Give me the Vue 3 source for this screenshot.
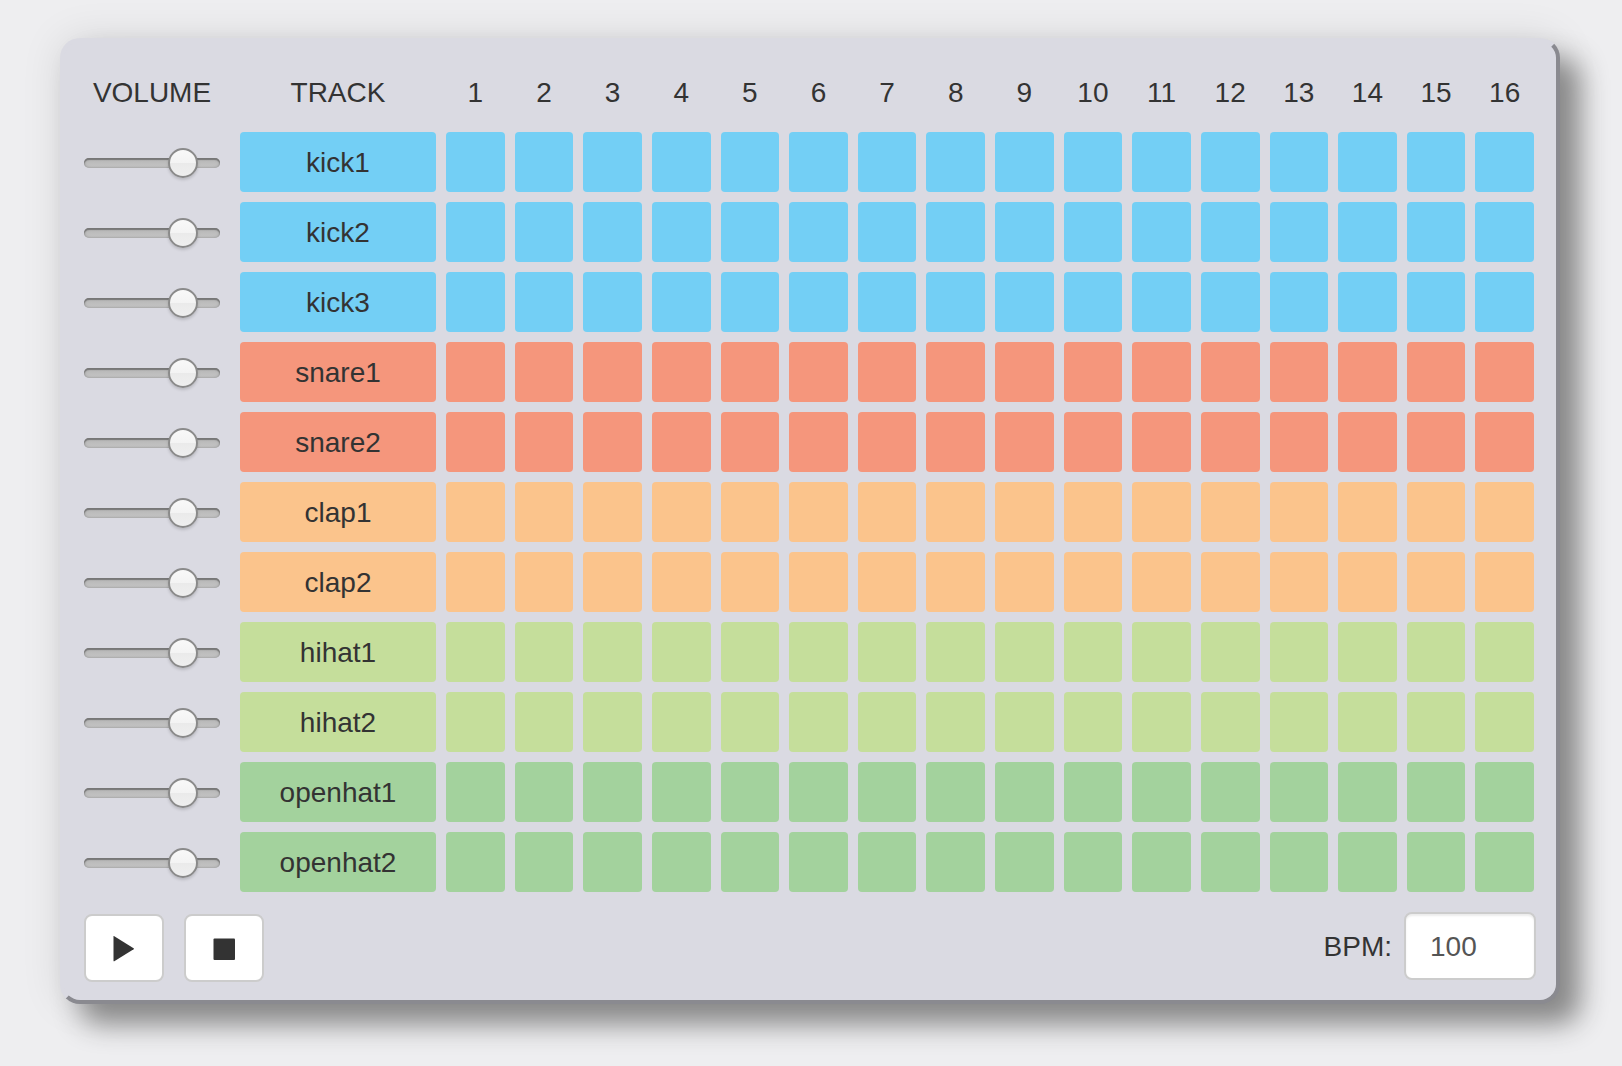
<script setup>
import { reactive, ref } from 'vue'

const STEPS = 16

const makeTrack = (name, kind) => ({
  name,
  kind,
  volume: 79,
  steps: Array(STEPS).fill(false),
})

const tracks = reactive([
  makeTrack('kick1', 'kick'),
  makeTrack('kick2', 'kick'),
  makeTrack('kick3', 'kick'),
  makeTrack('snare1', 'snare'),
  makeTrack('snare2', 'snare'),
  makeTrack('clap1', 'clap'),
  makeTrack('clap2', 'clap'),
  makeTrack('hihat1', 'hihat'),
  makeTrack('hihat2', 'hihat'),
  makeTrack('openhat1', 'openhat'),
  makeTrack('openhat2', 'openhat'),
])

const bpm = ref('100')
const playing = ref(false)
</script>

<template>
  <main class="machine">
    <table class="sequencer">
      <colgroup>
        <col class="col-volume" />
        <col class="col-track" />
        <col v-for="n in STEPS" :key="n" />
      </colgroup>
      <thead>
        <tr>
          <th scope="col" class="volume">VOLUME</th>
          <th scope="col">TRACK</th>
          <th v-for="n in STEPS" :key="n" scope="col">{{ n }}</th>
        </tr>
      </thead>
      <tbody>
        <tr v-for="track in tracks" :key="track.name" :class="track.kind">
          <td class="volume">
            <input
              v-model="track.volume"
              class="slider"
              type="range"
              min="0"
              max="100"
              :aria-label="track.name + ' volume'"
            />
          </td>
          <th scope="row" class="name">{{ track.name }}</th>
          <td v-for="(on, i) in track.steps" :key="i">
            <button
              type="button"
              class="step"
              :class="{ on }"
              :aria-pressed="on"
              :aria-label="track.name + ' step ' + (i + 1)"
              @click="track.steps[i] = !on"
            ></button>
          </td>
        </tr>
      </tbody>
    </table>

    <footer class="controls">
      <div class="transport">
        <button type="button" class="control" aria-label="Play" @click="playing = true">
          <svg width="28" height="28" viewBox="0 0 28 28" aria-hidden="true">
            <path d="M3.500 2.600 Q3.500 1.800 4.300 2.200 L23.600 14.200 Q24.400 14.700 23.600 15.200 L4.300 27.200 Q3.500 27.600 3.500 26.800 Z" fill="#333" />
          </svg>
        </button>
        <button type="button" class="control" aria-label="Stop" @click="playing = false">
          <svg width="28" height="28" viewBox="0 0 28 28" aria-hidden="true">
            <rect x="3.500" y="4.500" width="21.500" height="21.500" rx="1" fill="#333" />
          </svg>
        </button>
      </div>
      <div class="tempo">
        <label for="bpm">BPM:</label>
        <input id="bpm" v-model="bpm" type="text" inputmode="numeric" />
      </div>
    </footer>
  </main>
</template>

<style>
body {
  margin: 0;
  background: #eeeef0;
}
</style>

<style scoped>
.machine {
  box-sizing: border-box;
  margin: 38px 62px 62px 60px;
  padding: 10px 12px 18px 10px;
  border: 4px solid #dadae2;
  border-right-color: #8a8a90;
  border-bottom-color: #8a8a90;
  border-radius: 20px;
  background: #dadae2;
  box-shadow: 20px 20px 28px #888, 0 0 40px rgba(0, 0, 0, 0.1);
  color: #333;
  font-family: "Liberation Sans", Arial, sans-serif;
  font-size: 28px;
  line-height: 40px;
}

.sequencer {
  width: 100%;
  table-layout: fixed;
  border-collapse: separate;
  border-spacing: 10px;
}

.col-volume {
  width: 146px;
}

.col-track {
  width: 196px;
}

th,
td {
  box-sizing: border-box;
  height: 60px;
  padding: 0;
  font-weight: 400;
  text-align: center;
  vertical-align: middle;
}

th {
  padding-top: 2px;
}

.volume {
  padding-right: 10px;
}

.name {
  border-radius: 4px;
  background: var(--tone);
}

.kick {
  --tone: #73cff5;
}

.snare {
  --tone: #f5967c;
}

.clap {
  --tone: #fbc48c;
}

.hihat {
  --tone: #c5de9b;
}

.openhat {
  --tone: #a3d29d;
}

.step {
  display: block;
  width: 100%;
  height: 60px;
  padding: 0;
  border: 0;
  border-radius: 4px;
  background: var(--tone);
  cursor: pointer;
}

.step.on {
  filter: brightness(0.7);
}

.slider {
  -webkit-appearance: none;
  appearance: none;
  display: block;
  width: 100%;
  height: 30px;
  margin: 2px 0 0;
  background: transparent;
}

.slider::-webkit-slider-runnable-track {
  height: 10px;
  border-radius: 5px;
  background: linear-gradient(#b4b4b4, #c6c6c6);
  box-shadow: inset 0 2px 1px #777, inset 0 0 3px #888;
}

.slider::-webkit-slider-thumb {
  -webkit-appearance: none;
  box-sizing: border-box;
  width: 30px;
  height: 30px;
  margin-top: -10px;
  border: 2px solid #8a8a8a;
  border-radius: 50%;
  background: linear-gradient(#f9f9f9, #f3f3f3 50%, #eaeaea 50%, #efefef);
  box-shadow: 0 2px 3px rgba(0, 0, 0, 0.15);
}

.controls {
  display: flex;
  justify-content: space-between;
  min-height: 70px;
  padding: 10px 8px 0 10px;
}

.transport {
  display: flex;
  align-items: flex-end;
  gap: 20px;
}

.control {
  display: flex;
  align-items: center;
  justify-content: center;
  width: 80px;
  height: 68px;
  padding: 0;
  border: 2px solid #ccc;
  border-radius: 8px;
  background: #fff;
}

.tempo {
  display: flex;
  align-items: center;
  align-self: flex-start;
  gap: 12px;
}

.tempo label {
  padding-top: 2px;
}

.tempo input {
  box-sizing: border-box;
  width: 132px;
  height: 68px;
  padding: 2px 24px 0;
  border: 2px solid #ccc;
  border-radius: 8px;
  background: #fff;
  box-shadow: inset 0 2px 2px rgba(0, 0, 0, 0.075);
  color: #555;
  font: inherit;
}
</style>
